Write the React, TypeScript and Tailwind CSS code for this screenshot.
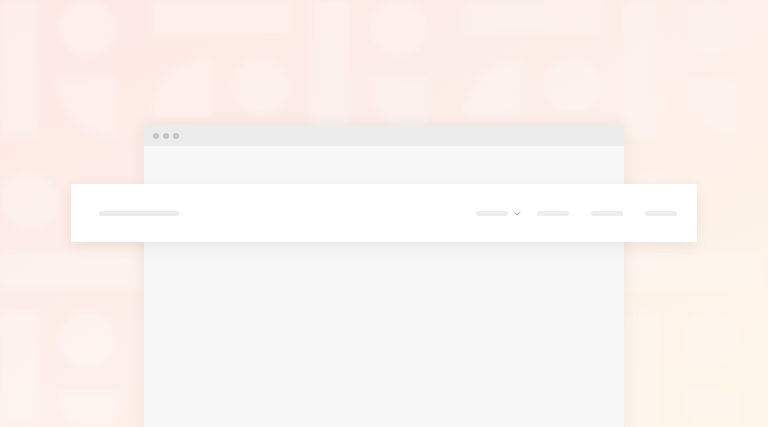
import React from 'react';

const Backdrop: React.FC = () => (
  <svg className="absolute inset-0 h-full w-full" viewBox="0 0 768 427" preserveAspectRatio="none">
    <defs>
      <filter id="soft" x="-10%" y="-10%" width="120%" height="120%">
        <feGaussianBlur stdDeviation="3" />
      </filter>
      <linearGradient id="fade" x1="0" y1="0" x2="1" y2="0">
        <stop offset="0" stopColor="#ffffff" stopOpacity="0.28" />
        <stop offset="0.6" stopColor="#ffffff" stopOpacity="0.24" />
        <stop offset="1" stopColor="#ffffff" stopOpacity="0.14" />
      </linearGradient>
      <pattern id="tile" width="312" height="312" patternUnits="userSpaceOnUse">
        <g fill="#ffffff">
          <rect x="0" y="0" width="38" height="138" />
          <circle cx="87" cy="28" r="29" />
          <rect x="152" y="0" width="138" height="35" />
          <path d="M57 78 L117 78 L117 138 A60 60 0 0 1 57 78 Z" />
          <path d="M152 118 A60 60 0 0 1 212 58 L212 118 Z" />
          <circle cx="261" cy="86" r="29" />
          <circle cx="30" cy="201" r="29" />
          <rect x="0" y="250" width="140" height="40" />
        </g>
      </pattern>
      <mask id="fadeMask">
        <rect width="768" height="427" fill="url(#fade)" />
      </mask>
    </defs>
    <g mask="url(#fadeMask)">
      <rect width="768" height="427" fill="url(#tile)" filter="url(#soft)" />
    </g>
  </svg>
);

const NavBar: React.FC = () => (
  <div className="-mx-[73px] flex h-[58px] items-center justify-between bg-white pl-[28px] pr-[20px] shadow-[0_4px_14px_rgba(0,0,0,0.07)]">
    <div className="h-[5px] w-[80px] rounded-full bg-[#ebebeb]" />
    <div className="flex items-center gap-[22px]">
      <div className="flex items-center gap-[5px]">
        <div className="h-[5px] w-[32px] rounded-full bg-[#ededed]" />
        <svg className="h-[5px] w-[8px]" viewBox="0 0 8 5" fill="none">
          <path d="M1 1 L4 4 L7 1" stroke="#b4b4b4" strokeWidth="1" strokeLinecap="round" strokeLinejoin="round" />
        </svg>
      </div>
      <div className="ml-[-6px] h-[5px] w-[32px] rounded-full bg-[#ededed]" />
      <div className="h-[5px] w-[32px] rounded-full bg-[#ededed]" />
      <div className="h-[5px] w-[32px] rounded-full bg-[#ededed]" />
    </div>
  </div>
);

export default function App() {
  return (
    <div className="relative h-[427px] w-full overflow-hidden bg-linear-to-br from-[#fde8e4] via-[#fdefe9] to-[#fef6e9]">
      <Backdrop />
      <div className="relative flex flex-col items-center pt-[125px]">
        <div className="w-[480px] shadow-[0_0_18px_rgba(0,0,0,0.06)]">
          <div className="flex h-[21px] items-center gap-[4px] bg-[#ececec] pl-[9px]">
            <span className="h-[6px] w-[6px] rounded-full bg-[#c6c6c6]" />
            <span className="h-[6px] w-[6px] rounded-full bg-[#c6c6c6]" />
            <span className="h-[6px] w-[6px] rounded-full bg-[#c6c6c6]" />
          </div>
          <div className="h-[290px] bg-[#f7f7f7] pt-[38px]">
            <NavBar />
          </div>
        </div>
      </div>
    </div>
  );
}
